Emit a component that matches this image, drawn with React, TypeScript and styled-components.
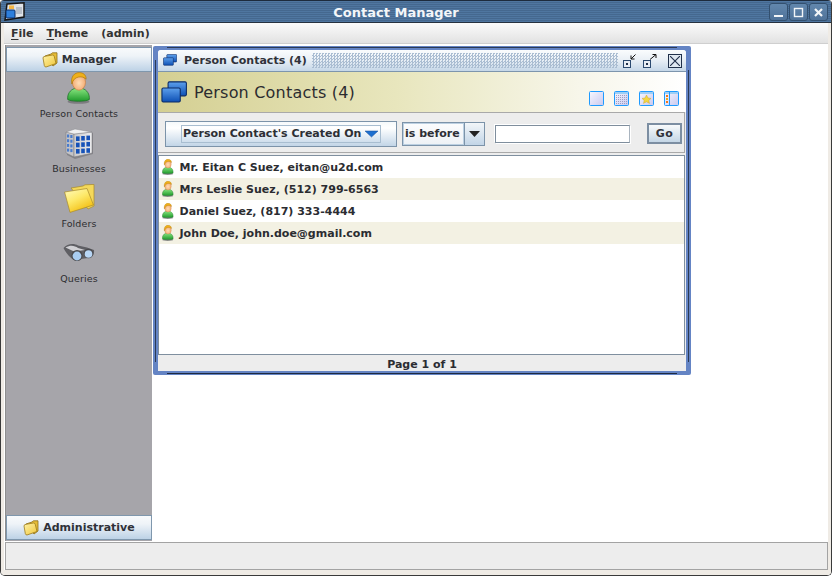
import React from "react";
import styled, { createGlobalStyle } from "styled-components";

const Global = createGlobalStyle`
  html, body { margin: 0; padding: 0; background: #fff; }
  body { font-family: "DejaVu Sans", sans-serif; color: #222; }
  #root { width: 832px; height: 576px; overflow: hidden; }
`;

const Frame = styled.div`
  width: 832px; height: 576px; box-sizing: border-box;
  display: flex; flex-direction: column; background: #fff;
  position: relative;
  border-left: 1px solid #3a3a3a; border-right: 1px solid #3a3a3a;
  border-bottom: 1px solid #3a3a3a; border-radius: 4px 4px 5px 5px; overflow: hidden;
`;
const TitleBar = styled.header`
  height: 23px; flex: none; position: relative;
  border-top: 1px solid #1d2b3d; border-bottom: 1px solid #26313f; box-sizing: border-box;
  background: repeating-linear-gradient(180deg, #4f76a0 0 1px, #45688f 1px 2px);
  display: flex; align-items: center; justify-content: center;
  margin: 0 -1px;
`;
const WindowTitle = styled.span`
  font: bold 13px "DejaVu Sans", sans-serif; color: #f4f6f9;
  padding-right: 40px; margin-top: 1px;
`;
const AppLogo = styled.div`
  position: absolute; left: 4px; top: 1px; width: 21px; height: 20px;
`;
const WinButtons = styled.div`
  position: absolute; right: 4px; top: 2px; display: flex; gap: 1px;
`;
const WinButton = styled.div`
  width: 19px; height: 18px; box-sizing: border-box; border: 1px solid #33506f; border-radius: 3px;
  background: linear-gradient(#6287ad, #4f7299); display: flex; align-items: center; justify-content: center;
`;
const Body = styled.div`
  flex: 1; display: flex; flex-direction: column;
  border-left: 3px solid #efebe5; border-right: 3px solid #efebe5; border-bottom: 5px solid #efebe5; min-height: 0;
`;
const MenuBar = styled.nav`
  height: 21px; flex: none; box-sizing: border-box; display: flex; align-items: center; gap: 13px; padding: 0 0 0 7px;
  background: linear-gradient(#fbfbfb, #e2e2e2); border-bottom: 1px solid #cfcfcf;
  font: bold 11px "DejaVu Sans", sans-serif; color: #333;
  u { text-decoration: underline; text-underline-offset: 2px; }
`;
const Main = styled.div`
  flex: 1; display: flex; min-height: 0; padding: 1px 0 0 1px; background: #fff; position: relative;
`;
const Sidebar = styled.aside`
  width: 146px; flex: none; display: flex; flex-direction: column; background: #a6a5aa;
  border-left: 1px solid #8e8e8e; padding: 2px 0 1px;
`;
const AccordionHead = styled.div`
  height: 25px; flex: none; box-sizing: border-box;
  border: 1px solid #7f97ad;
  background: linear-gradient(#f8fafc, #eef3f8 35%, #bdd2e6);
  display: flex; align-items: center; justify-content: center; gap: 4px;
  font: bold 11px "DejaVu Sans", sans-serif; color: #2f3138;
`;
const Launchers = styled.div`
  flex: 1; display: flex; flex-direction: column; align-items: center;
`;
const Launcher = styled.div`
  height: 55px; width: 100%; display: flex; flex-direction: column; align-items: center;
  justify-content: flex-end; box-sizing: border-box; gap: 4px;
  font: 9.5px "DejaVu Sans", sans-serif; letter-spacing: .1px; color: #2d2d30;
  span { height: 12px; line-height: 12px; }
  &:first-child { height: 48px; }
`;
const IconSlot = styled.div`
  height: 32px; display: flex; align-items: center; justify-content: center;
`;
const Desktop = styled.div`flex: 1; position: relative; background: #fff;`;

const StatusBar = styled.footer`
  height: 28px; flex: none; box-sizing: border-box; background: #ededed;
  border: 1px solid #a3a3a3; margin: 1px 0 0 1px;
`;

const InternalFrame = styled.section`
  position: absolute; left: 1px; top: 1px; width: 538px; height: 329px; box-sizing: border-box;
  background: #6484c4; padding: 4px 5px 4px 5px; display: flex; flex-direction: column;
  border-radius: 2px;
  &::before {
    content: ""; position: absolute; left: 14px; right: 14px; top: 1px; height: 1px; background: #2b3a55;
  }
  &::after {
    content: ""; position: absolute; left: 14px; right: 14px; bottom: 1px; height: 1px; background: #1e2a40;
  }
`;
const FrameBody = styled.div`
  flex: 1; min-height: 0; display: flex; flex-direction: column; background: #ededed; border-radius: 3px 3px 0 0;
`;
const EdgeLine = styled.i<{ $side: "left" | "right" }>`
  position: absolute; bottom: 13px; width: 1px; background: #2b3a55;
  ${p => p.$side === "left" ? "left: 2px; top: 14px;" : "right: 2px; top: 24px;"}
`;
const FrameTitle = styled.div`
  height: 22px; flex: none; box-sizing: border-box; display: flex; align-items: center; padding: 0 0 0 5px;
  background: linear-gradient(#fafcfd, #eaf0f6 45%, #c5d7e8); border-bottom: 1px solid #7d95ad;
  font: bold 11px "DejaVu Sans", sans-serif; color: #30323a;
  border-radius: 3px 3px 0 0;
`;
const FrameTitleText = styled.span`margin-left: 7px; white-space: nowrap;`;
const Dots = styled.div`
  flex: 1; height: 15px; margin: 0 4px 0 5px;
  background-image: conic-gradient(#aabdd2 25%, transparent 0 50%, #aabdd2 0 75%, transparent 0);
  background-size: 3px 3px;
`;
const FrameControls = styled.div`display: flex; align-items: center; gap: 5px; padding-right: 4px;`;
const CloseBox = styled.div`
  width: 14px; height: 14px; box-sizing: border-box; border: 1px solid #20304a; margin-left: 6px;
  display: flex; align-items: center; justify-content: center; background: #dfe8f1;
`;
const Banner = styled.div`
  height: 40px; flex: none; box-sizing: border-box; display: flex; align-items: center; padding: 0 0 0 3px;
  background: linear-gradient(90deg, #d4cf92, #e8e6bd 45%, #f7f6ea 80%, #ffffff);
`;
const BannerTitle = styled.h1`
  margin: 0 0 0 7px; font: 500 16px "DejaVu Sans", sans-serif; letter-spacing: .2px; color: #2c2c30; flex: 1;
`;
const ViewIcons = styled.div`
  display: flex; gap: 10px; padding: 12px 7px 0 0; align-items: flex-end;
`;
const FilterPanel = styled.div`
  height: 41px; flex: none; box-sizing: border-box; background: #ededed; margin-right: 1px;
  border: 1px solid #a9a9a9; border-left: 0; display: flex; align-items: center; padding: 2px 2px 0 7px;
`;
const FieldPicker = styled.div`
  width: 232px; height: 26px; box-sizing: border-box; border: 1px solid #7c93a9;
  background: linear-gradient(#f6f9fb, #ffffff 25%, #c2d5e7); display: flex; align-items: center; justify-content: center;
`;
const FieldInner = styled.div`
  width: 200px; height: 18px; box-sizing: border-box; border: 1px solid #a8bdd0;
  display: flex; align-items: center; justify-content: space-between; padding: 0 0 0 1px;
  font: bold 11px "DejaVu Sans", sans-serif; color: #2d2f35; white-space: nowrap;
`;
const Operator = styled.div`
  width: 83px; height: 24px; box-sizing: border-box; margin-left: 5px; border: 1px solid #7c93a9; display: flex;
  background: #f6f8fa;
`;
const OperatorValue = styled.div`
  flex: 1; display: flex; align-items: center; padding-left: 1px; border: 1px solid #bcd0e2;
  background: linear-gradient(#fbfcfd, #eef2f6);
  font: bold 11px "DejaVu Sans", sans-serif; color: #2d2f35; white-space: nowrap;
`;
const OperatorArrow = styled.div`
  width: 19px; flex: none; border-left: 1px solid #7c93a9; display: flex; align-items: center; justify-content: center;
  background: linear-gradient(#f2f6f9, #c2d5e7);
`;
const TextField = styled.input`
  width: 135px; height: 18px; box-sizing: border-box; margin: 0 0 0 10px; border: 1px solid #7f8e9d;
  border-right-color: #a9b4bf; background: #fff; padding: 0; outline: none;
  box-shadow: 1px 1px 0 #fff, -1px -1px 0 #fff;
`;
const GoButton = styled.div`
  width: 35px; height: 21px; box-sizing: border-box; margin-left: 17px; border: 2px solid #7c8ea2;
  background: linear-gradient(#f8fafb, #c4d6e6); display: flex; align-items: center; justify-content: center;
  font: bold 11px "DejaVu Sans", sans-serif; letter-spacing: .5px; color: #30323a;
`;
const ListPanel = styled.div`
  flex: 1; min-height: 0; margin: 2px 1px 0 0; box-sizing: border-box; background: #fff;
  border: 1px solid #7f8f9f; display: flex; flex-direction: column;
`;
const Row = styled.div<{ $alt?: boolean }>`
  height: 22px; flex: none; display: flex; align-items: center; gap: 6px; padding-left: 3px;
  background: ${p => (p.$alt ? "#f3f1e3" : "#fff")};
  font: bold 11px "DejaVu Sans", sans-serif; color: #2b2c31; white-space: nowrap;
`;
const Pager = styled.div`
  height: 16px; flex: none; background: #ededed; display: flex; align-items: center; justify-content: center;
  font: bold 11px "DejaVu Sans", sans-serif; color: #2b2c31; padding-top: 2px; box-sizing: border-box;
`;

const Person = ({ size }: { size: number }) => (
  <svg width={size * 0.72} height={size} viewBox="0 0 26 36">
    <defs>
      <linearGradient id="shirt" x1="0" y1="0" x2="0" y2="1"><stop offset="0" stopColor="#86e47e" /><stop offset="1" stopColor="#1f9a2c" /></linearGradient>
      <radialGradient id="skin" cx=".5" cy=".55" r=".6"><stop offset="0" stopColor="#ffdcb6" /><stop offset="1" stopColor="#f0a468" /></radialGradient>
    </defs>
    <ellipse cx="13" cy="33.4" rx="12.5" ry="2.4" fill="#6f6f72" opacity=".75" />
    <path d="M.8 31c-.6-6 2.6-11 8-12.5h8.4c5.4 1.5 8.6 6.5 8 12.5-3 2.6-21.400 2.600-24.400 0z" fill="url(#shirt)" stroke="#186f22" strokeWidth=".8" />
    <ellipse cx="13.500" cy="11.500" rx="7.400" ry="9" fill="url(#skin)" stroke="#c77a3c" strokeWidth=".7" />
    <path d="M5.500 13.500C3.800 5 8.500.5 14 .6c4.600.1 7.700 3 7.600 7.400-2.500-2.400-5.600-2.800-8.400-2.400-3.800.6-6.700 3.400-7.700 7.900z" fill="#efb01a" stroke="#a9740a" strokeWidth=".7" />
  </svg>
);
const Building = () => (
  <svg width="29" height="31" viewBox="0 0 29 31">
    <defs><linearGradient id="bld" x1="0" x2="1"><stop offset="0" stopColor="#c9c9cc" /><stop offset="1" stopColor="#ececee" /></linearGradient></defs>
    <path d="M2 5 L10 8 L28 5 V26 L10 31 L2 27Z" fill="#6a6a6d" opacity=".55" />
    <path d="M1 4 L9 6 V29 L1 25Z" fill="#c4c4c8" stroke="#77777b" strokeWidth=".5" />
    <path d="M9 6 L27 4 V25 L9 29Z" fill="url(#bld)" stroke="#77777b" strokeWidth=".5" />
    <path d="M1 4 L10 1 L27 4 L9 6Z" fill="#f0f0f1" stroke="#8a8a8e" strokeWidth=".5" />
    {[0, 1, 2].map(r => [0, 1, 2].map(c => <rect key={`${r}${c}`} x={11 + c * 5.2} y={8.400 + r * 6.300 - c * .4} width="3.600" height="4.600" fill="#1652b8" />))}
    {[0, 1, 2, 3].map(r => [0, 1].map(c => <rect key={`l${r}${c}`} x={2 + c * 3.3} y={6.500 + r * 4.700 + c * .5} width="2.200" height="3" fill="#4a7ccc" />))}
  </svg>
);
const BigFolder = () => (
  <svg width="31" height="29" viewBox="0 0 31 29">
    <defs><linearGradient id="fold" x1="0" y1="0" x2=".6" y2="1"><stop offset="0" stopColor="#fffbc0" /><stop offset=".5" stopColor="#fde96a" /><stop offset="1" stopColor="#f3bd0f" /></linearGradient></defs>
    <path d="M7 4 L19 2 L21 .8 L30 .4 V22 L24 25Z" fill="#f4d85a" stroke="#a78a2b" strokeWidth=".7" />
    <path d="M.6 8 L23 4.500 L29.500 21 L6 28.400Z" fill="url(#fold)" stroke="#a78a2b" strokeWidth=".7" />
  </svg>
);
const Binoculars = () => (
  <svg width="32" height="22" viewBox="0 0 32 22">
    <path d="M.5 6 C4 1.500 11 1 15 3.500 L24 5.500 L31 8 C31.500 12 30 15 25 16 L11 18 C6 15 2.500 10 .5 6Z" fill="#5f5f64" />
    <path d="M2.500 5.500 C8 2.500 12 4 15 6 L22 8 L11 9.500Z" fill="#d0d0d4" />
    <circle cx="14" cy="13.500" r="5.600" fill="#4a4a4e" />
    <circle cx="14" cy="14" r="4.400" fill="#a9cdf2" />
    <circle cx="25.500" cy="11.500" r="4.800" fill="#4a4a4e" />
    <circle cx="25.500" cy="12" r="3.800" fill="#b8d6f5" />
  </svg>
);
const SmallFolder = () => (
  <svg width="16" height="16" viewBox="0 0 16 16">
    <defs><linearGradient id="sf" x1="0" y1="0" x2="1" y2="1"><stop offset="0" stopColor="#fff3a8" /><stop offset="1" stopColor="#f0c63a" /></linearGradient></defs>
    <path d="M3 4 L9 2 L10.500 .8 L15 .8 V11 L11 14Z" fill="#e6bc36" stroke="#8c6f1d" strokeWidth=".8" />
    <path d="M1 6 Q1 4.500 3 4.300 L10.500 3 Q12 3 12.300 4.500 L14 11.500 L4 15 Q2.600 15 2.300 13.500Z" fill="url(#sf)" stroke="#9a7a1c" strokeWidth=".8" />
  </svg>
);
const Windows = ({ s }: { s: number }) => (
  <svg width={s} height={s * 0.87} viewBox="0 0 24 21">
    <defs><linearGradient id="win" x1="0" y1="0" x2="0" y2="1"><stop offset="0" stopColor="#5da0ec" /><stop offset="1" stopColor="#0d4fb4" /></linearGradient></defs>
    <rect x="6.500" y=".8" width="17" height="13" rx="1.200" fill="url(#win)" stroke="#0a2a66" />
    <rect x=".8" y="6.500" width="17" height="13" rx="1.200" fill="url(#win)" stroke="#0a2a66" />
  </svg>
);
const ViewIcon = ({ kind }: { kind: "plain" | "grid" | "star" | "side" }) => (
  <svg width="15" height="15" viewBox="0 0 15 15">
    <defs><linearGradient id="vi" x1="0" y1="0" x2="1" y2="1"><stop offset="0" stopColor="#f8f8ff" /><stop offset="1" stopColor="#c9c9ef" /></linearGradient></defs>
    <rect x=".5" y=".5" width="14" height="14" rx="1" fill="url(#vi)" stroke="#1e9bff" />
    {kind !== "plain" && <rect x="1" y="1" width="13" height="2" fill="#9fcff5" />}
    {kind === "grid" && <g fill="#9f9fc2">{[4, 6, 8, 10, 12].map(y => [2, 4, 6, 8, 10, 12].map(x => <rect key={`${x}${y}`} x={x} y={y} width="1" height="1" />))}</g>}
    {kind === "star" && <path d="M7.500 4 L9 7 L12 7.400 L9.800 9.400 L10.500 12.400 L7.500 10.800 L4.500 12.400 L5.200 9.400 L3 7.400 L6 7Z" fill="#f5d740" stroke="#c79a16" strokeWidth=".4" />}
    {kind === "side" && <g><rect x="5" y="1" width="1" height="13" fill="#1e9bff" /><rect x="2" y="4" width="2" height="2" fill="#f07a18" /><rect x="2" y="7" width="2" height="2" fill="#f2a918" /><rect x="2" y="10" width="2" height="2" fill="#f07a18" /></g>}
  </svg>
);
const IconifyDown = () => (
  <svg width="15" height="15" viewBox="0 0 15 15">
    <rect x="1.500" y="7.500" width="7" height="7" fill="#e8eef5" stroke="#2b4a70" />
    <rect x="4" y="10" width="2" height="2" fill="#20304a" />
    <path d="M13.500 1.500 L9 6 M9 2.500 V6 H12.500" stroke="#111" fill="none" />
  </svg>
);
const MaximizeUp = () => (
  <svg width="15" height="15" viewBox="0 0 15 15">
    <rect x="1.500" y="7.500" width="7" height="7" fill="#e8eef5" stroke="#2b4a70" />
    <rect x="4" y="10" width="2" height="2" fill="#20304a" />
    <path d="M8 6.500 L14 1.500 M10.500 1.500 H14 V5" stroke="#111" fill="none" />
  </svg>
);

export default function App() {
  const rows = [
    "Mr. Eitan C Suez, eitan@u2d.com",
    "Mrs Leslie Suez, (512) 799-6563",
    "Daniel Suez, (817) 333-4444",
    "John Doe, john.doe@gmail.com",
  ];
  return (
    <>
      <Global />
      <Frame>
        <TitleBar>
          <AppLogo>
            <svg width="21" height="20" viewBox="0 0 21 20">
              <path d="M3 2 L20 .8 V15 L1 18 Z" fill="#dfe3e8" stroke="#161616" strokeWidth="1.500" />
              <rect x="12" y="5" width="6" height="7" fill="#b9c0c9" />
              <rect x="2" y="8" width="9" height="8" rx="1" fill="#2d7fdc" stroke="#0e2f66" />
              <path d="M5 3.500 h5 v3.500 h-5z" fill="#f2b544" />
            </svg>
          </AppLogo>
          <WindowTitle>Contact Manager</WindowTitle>
          <WinButtons>
            <WinButton><svg width="11" height="11" viewBox="0 0 11 11"><rect x="1" y="8" width="9" height="2" fill="#f2f5f8" /></svg></WinButton>
            <WinButton><svg width="11" height="11" viewBox="0 0 11 11"><rect x="1.500" y="1.500" width="8" height="8" fill="none" stroke="#f2f5f8" strokeWidth="1.400" /></svg></WinButton>
            <WinButton><svg width="11" height="11" viewBox="0 0 11 11"><path d="M2 2 L9 9 M9 2 L2 9" stroke="#f2f5f8" strokeWidth="2.200" /></svg></WinButton>
          </WinButtons>
        </TitleBar>
        <Body>
          <MenuBar>
            <span><u>F</u>ile</span>
            <span><u>T</u>heme</span>
            <span>(admin)</span>
          </MenuBar>
          <Main>
            <Sidebar>
              <AccordionHead><SmallFolder />Manager</AccordionHead>
              <Launchers>
                <Launcher><IconSlot><Person size={32} /></IconSlot><span>Person Contacts</span></Launcher>
                <Launcher><IconSlot><Building /></IconSlot><span>Businesses</span></Launcher>
                <Launcher><IconSlot><BigFolder /></IconSlot><span>Folders</span></Launcher>
                <Launcher><IconSlot><Binoculars /></IconSlot><span>Queries</span></Launcher>
              </Launchers>
              <AccordionHead><SmallFolder />Administrative</AccordionHead>
            </Sidebar>
            <Desktop>
              <InternalFrame>
                <EdgeLine $side="left" />
                <EdgeLine $side="right" />
                <FrameBody>
                  <FrameTitle>
                    <Windows s={14} />
                    <FrameTitleText>Person Contacts (4)</FrameTitleText>
                    <Dots />
                    <FrameControls>
                      <IconifyDown />
                      <MaximizeUp />
                      <CloseBox>
                        <svg width="10" height="10" viewBox="0 0 10 10"><path d="M0 0 L10 10 M10 0 L0 10" stroke="#20304a" strokeWidth="1.100" /></svg>
                      </CloseBox>
                    </FrameControls>
                  </FrameTitle>
                  <Banner>
                    <Windows s={26} />
                    <BannerTitle>Person Contacts (4)</BannerTitle>
                    <ViewIcons>
                      <ViewIcon kind="plain" />
                      <ViewIcon kind="grid" />
                      <ViewIcon kind="star" />
                      <ViewIcon kind="side" />
                    </ViewIcons>
                  </Banner>
                  <FilterPanel>
                    <FieldPicker>
                      <FieldInner>
                        Person Contact's Created On
                        <svg width="15" height="8" viewBox="0 0 15 8" style={{ marginRight: 1 }}><path d="M1 1 H14 L7.500 7Z" fill="#1d6fd0" stroke="#1a4f96" strokeWidth=".5" /></svg>
                      </FieldInner>
                    </FieldPicker>
                    <Operator>
                      <OperatorValue>is before</OperatorValue>
                      <OperatorArrow>
                        <svg width="11" height="6" viewBox="0 0 11 6"><path d="M0 0 H11 L5.500 6Z" fill="#222" /></svg>
                      </OperatorArrow>
                    </Operator>
                    <TextField readOnly />
                    <GoButton>Go</GoButton>
                  </FilterPanel>
                  <ListPanel>
                    {rows.map((r, i) => (
                      <Row key={r} $alt={i % 2 === 1}>
                        <Person size={16} />
                        {r}
                      </Row>
                    ))}
                  </ListPanel>
                  <Pager>Page 1 of 1</Pager>
                </FrameBody>
              </InternalFrame>
            </Desktop>
          </Main>
          <StatusBar />
        </Body>
      </Frame>
    </>
  );
}
